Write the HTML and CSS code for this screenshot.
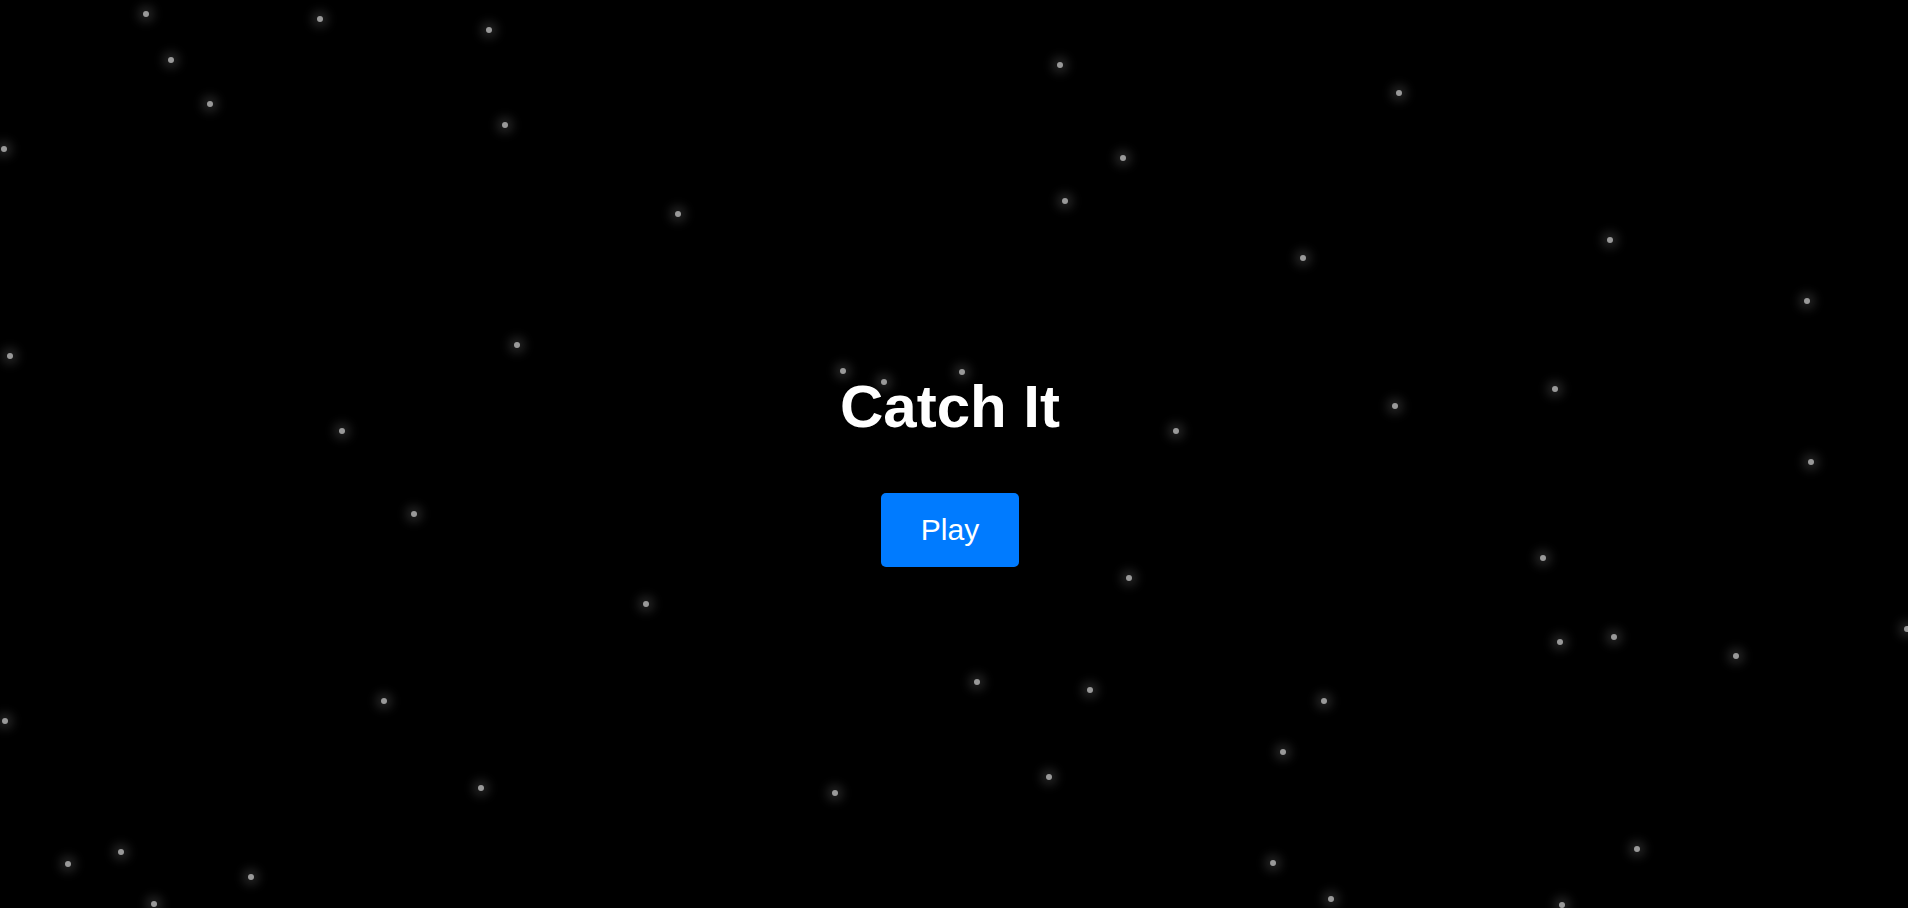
FILE: index.html
```html
<!DOCTYPE html>
<html lang="en">
<head>
<meta charset="utf-8">
<title>Catch It</title>
<link rel="stylesheet" href="styles.css">
</head>
<body>
<div class="sky">
  <span class="star" style="left:146px;top:14px"></span>
  <span class="star" style="left:320px;top:19px"></span>
  <span class="star" style="left:489px;top:30px"></span>
  <span class="star" style="left:171px;top:60px"></span>
  <span class="star" style="left:210px;top:104px"></span>
  <span class="star" style="left:505px;top:125px"></span>
  <span class="star" style="left:4px;top:149px"></span>
  <span class="star" style="left:10px;top:356px"></span>
  <span class="star" style="left:517px;top:345px"></span>
  <span class="star" style="left:342px;top:431px"></span>
  <span class="star" style="left:1060px;top:65px"></span>
  <span class="star" style="left:1123px;top:158px"></span>
  <span class="star" style="left:1065px;top:201px"></span>
  <span class="star" style="left:678px;top:214px"></span>
  <span class="star" style="left:843px;top:371px"></span>
  <span class="star" style="left:884px;top:382px"></span>
  <span class="star" style="left:962px;top:372px"></span>
  <span class="star" style="left:1176px;top:431px"></span>
  <span class="star" style="left:1399px;top:93px"></span>
  <span class="star" style="left:1303px;top:258px"></span>
  <span class="star" style="left:1610px;top:240px"></span>
  <span class="star" style="left:1807px;top:301px"></span>
  <span class="star" style="left:1555px;top:389px"></span>
  <span class="star" style="left:1395px;top:406px"></span>
  <span class="star" style="left:1811px;top:462px"></span>
  <span class="star" style="left:414px;top:514px"></span>
  <span class="star" style="left:384px;top:701px"></span>
  <span class="star" style="left:5px;top:721px"></span>
  <span class="star" style="left:481px;top:788px"></span>
  <span class="star" style="left:121px;top:852px"></span>
  <span class="star" style="left:68px;top:864px"></span>
  <span class="star" style="left:251px;top:877px"></span>
  <span class="star" style="left:154px;top:904px"></span>
  <span class="star" style="left:646px;top:604px"></span>
  <span class="star" style="left:1129px;top:578px"></span>
  <span class="star" style="left:977px;top:682px"></span>
  <span class="star" style="left:1090px;top:690px"></span>
  <span class="star" style="left:1049px;top:777px"></span>
  <span class="star" style="left:835px;top:793px"></span>
  <span class="star" style="left:1273px;top:863px"></span>
  <span class="star" style="left:1543px;top:558px"></span>
  <span class="star" style="left:1560px;top:642px"></span>
  <span class="star" style="left:1614px;top:637px"></span>
  <span class="star" style="left:1736px;top:656px"></span>
  <span class="star" style="left:1907px;top:629px"></span>
  <span class="star" style="left:1324px;top:701px"></span>
  <span class="star" style="left:1283px;top:752px"></span>
  <span class="star" style="left:1637px;top:849px"></span>
  <span class="star" style="left:1331px;top:899px"></span>
  <span class="star" style="left:1562px;top:905px"></span>
</div>
<main class="menu">
  <h1 class="title">Catch It</h1>
  <button class="play-btn" type="button">Play</button>
</main>
</body>
</html>
```

FILE: styles.css
```css
html, body {
  margin: 0;
  padding: 0;
  height: 100%;
}

body {
  background: #000;
  color: #fff;
  font-family: "Liberation Sans", Arial, sans-serif;
  overflow: hidden;
  position: relative;
}

.sky {
  position: absolute;
  inset: 0;
  overflow: hidden;
  pointer-events: none;
}

.star {
  position: absolute;
  width: 6px;
  height: 6px;
  margin: -3px 0 0 -3px;
  border-radius: 50%;
  background: #fff;
  opacity: 0.6;
  box-shadow: 0 0 12px 4px rgba(255, 255, 255, 0.35);
}

.menu {
  position: relative;
  z-index: 1;
  height: 100%;
  padding-right: 8px;
  box-sizing: border-box;
  display: flex;
  flex-direction: column;
  align-items: center;
  justify-content: center;
}

.title {
  margin: 31px 0 52px;
  font-size: 60px;
  font-weight: bold;
  line-height: normal;
  color: #fff;
}

.play-btn {
  margin: 0;
  padding: 20px 40px;
  font-family: "Liberation Sans", Arial, sans-serif;
  font-size: 30px;
  line-height: normal;
  color: #fff;
  background: #007bff;
  border: none;
  border-radius: 5px;
  cursor: pointer;
}
```
